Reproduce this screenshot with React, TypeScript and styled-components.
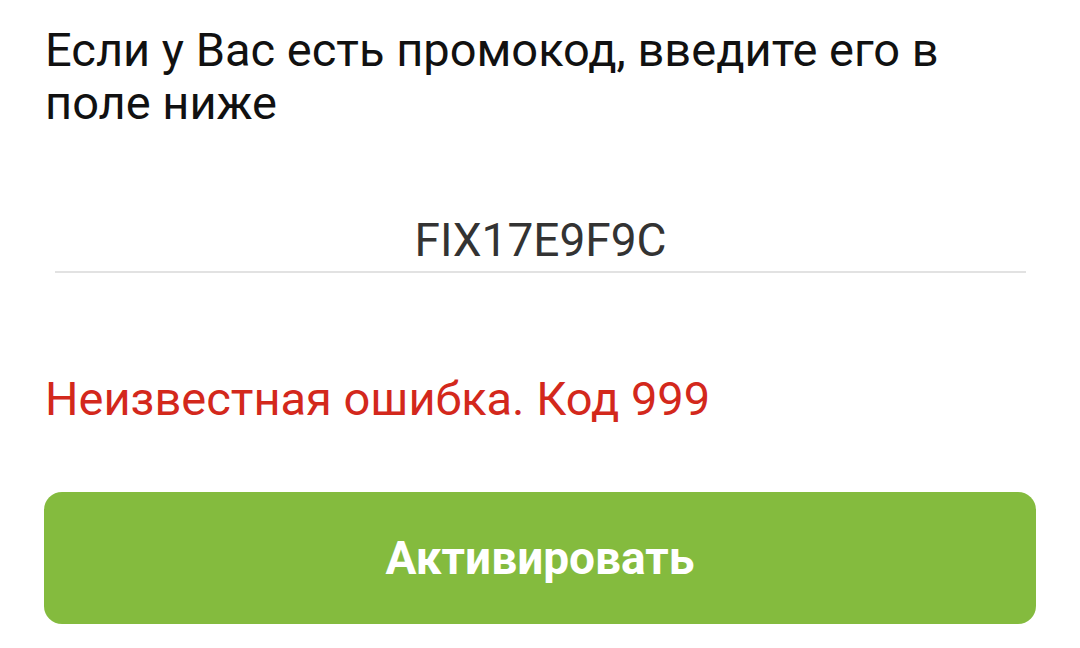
import React from 'react';
import styled, { createGlobalStyle } from 'styled-components';

const GlobalStyle = createGlobalStyle`
  html, body {
    margin: 0;
    padding: 0;
    background: #fff;
  }
  body {
    font-family: Roboto, "Noto Sans", sans-serif;
  }
`;

const Page = styled.div`
  width: 1080px;
  height: 648px;
  box-sizing: border-box;
  padding: 23px 44px 0 44px;
  display: flex;
  flex-direction: column;
`;

const Prompt = styled.p`
  margin: 0 0 0 1px;
  font-size: 47px;
  line-height: 53px;
  color: #111;
  max-width: 960px;
`;

const Field = styled.div`
  margin: 84px 10px 0 11px;
  border-bottom: 2px solid #e2e2e2;
  padding-bottom: 4px;
`;

const CodeInput = styled.input`
  display: block;
  width: 100%;
  border: none;
  outline: none;
  background: transparent;
  padding: 0;
  font-family: Roboto, sans-serif;
  font-size: 46px;
  line-height: 54px;
  height: 54px;
  color: #333;
  text-align: center;
`;

const ErrorText = styled.div`
  margin: 98px 0 0 1px;
  font-size: 47px;
  line-height: 55px;
  color: #d3281c;
`;

const ActivateButton = styled.button`
  margin-top: 66px;
  height: 132px;
  width: 992px;
  border: none;
  border-radius: 18px;
  background: #84bb3e;
  color: #fff;
  font-family: Roboto, sans-serif;
  font-weight: 700;
  font-size: 46px;
  cursor: pointer;
`;

export default function App() {
  return (
    <>
      <GlobalStyle />
      <Page>
        <Prompt>Если у Вас есть промокод, введите его в поле ниже</Prompt>
        <Field>
          <CodeInput defaultValue="FIX17E9F9C" />
        </Field>
        <ErrorText>Неизвестная ошибка. Код 999</ErrorText>
        <ActivateButton>Активировать</ActivateButton>
      </Page>
    </>
  );
}
